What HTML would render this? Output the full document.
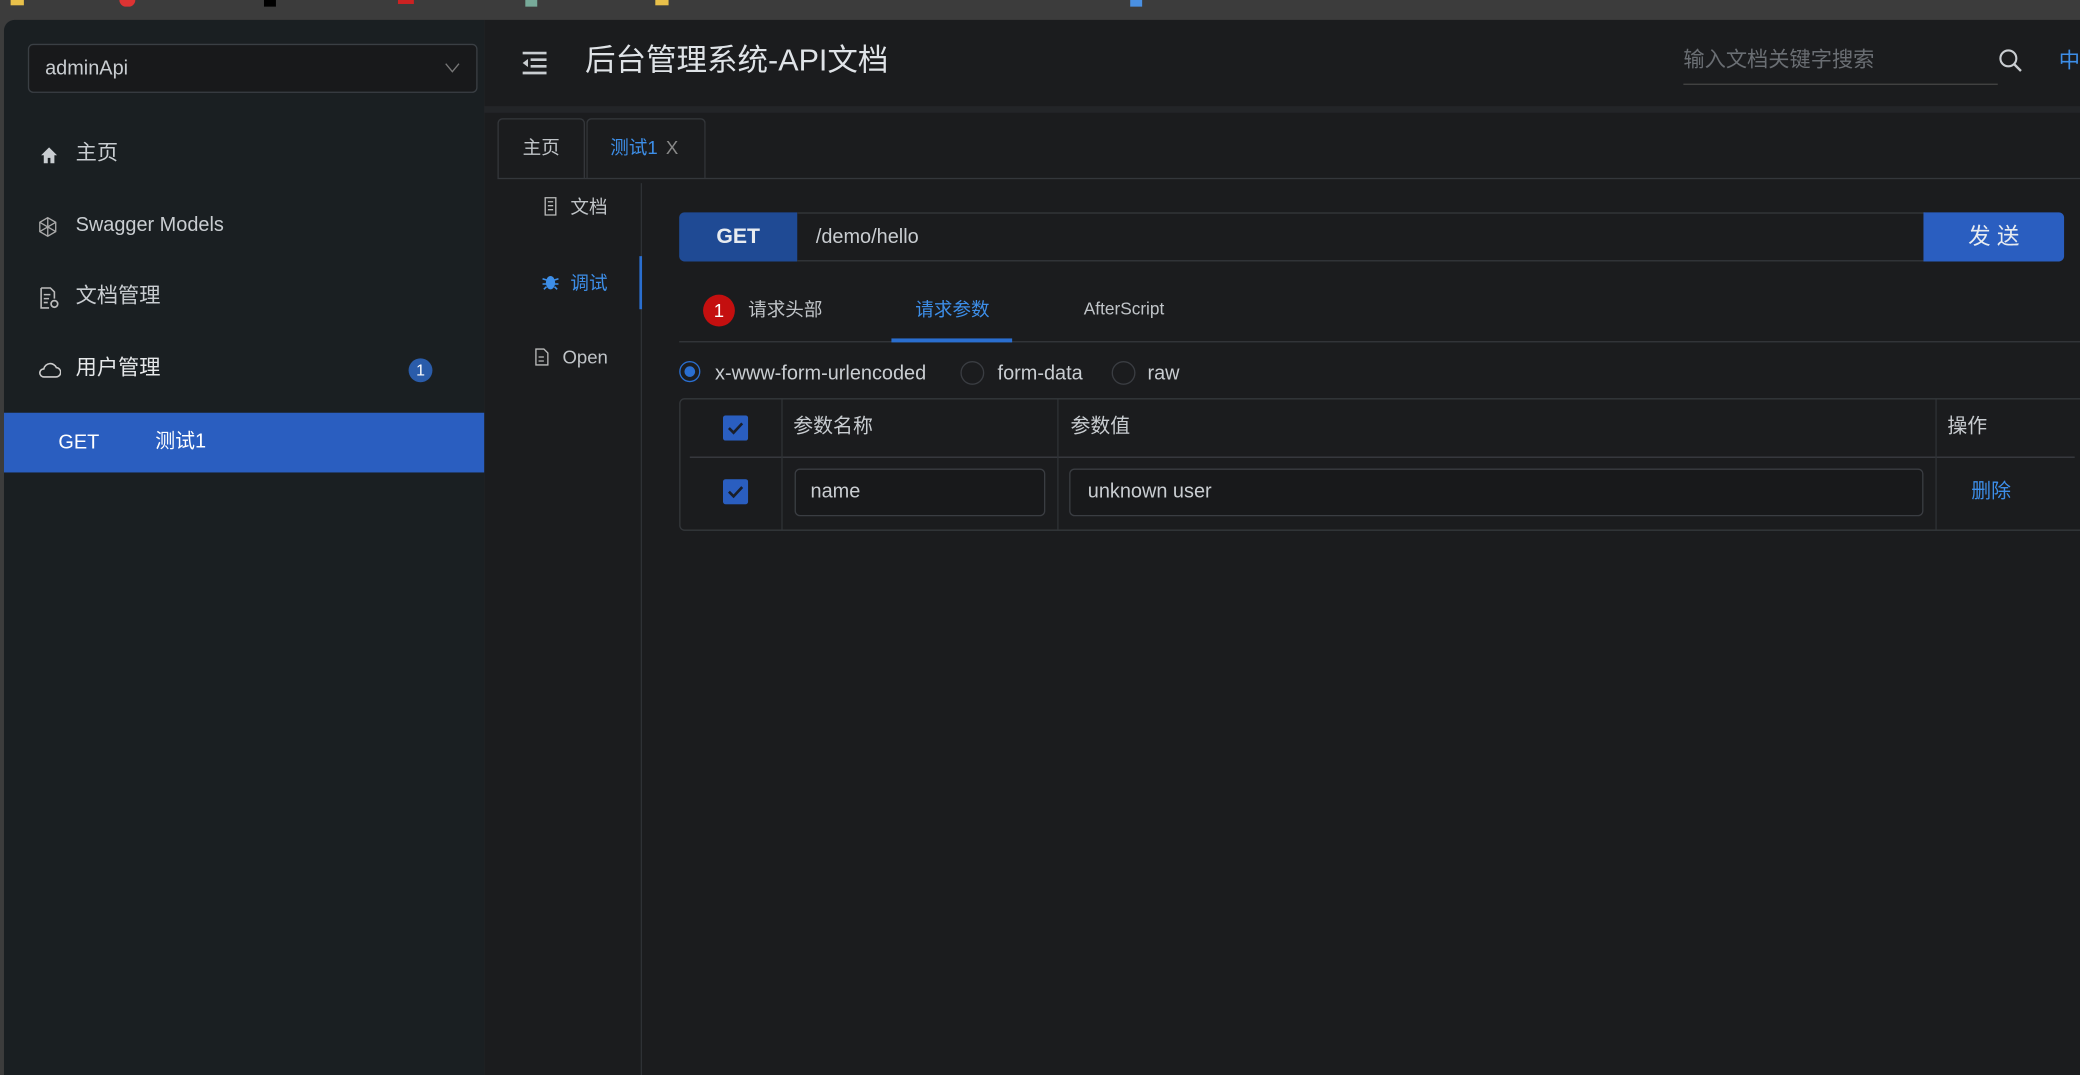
<!DOCTYPE html>
<html><head><meta charset="utf-8">
<style>
html,body{margin:0;padding:0;width:2080px;height:1075px;overflow:hidden;background:#3c3c3c;}
#w{position:absolute;left:0;top:0;width:1568px;height:810px;transform:scale(1.32653,1.32716);transform-origin:0 0;font-family:"Liberation Sans","Noto Sans CJK SC",sans-serif;color:#c9cdd1;line-height:1.3;}
.a{position:absolute;}
.side{left:3px;top:15px;width:362px;height:795px;background:#1a1f22;border-top-left-radius:8px;}
.main{left:365px;top:15px;width:1203px;height:795px;background:#1b1c1e;}
.sel{left:21px;top:33px;width:337px;height:35px;border:1px solid #3a3f44;border-radius:4px;background:#18191b;}
.mi{left:30px;font-size:16px;color:#c9cdd1;}
.inp{border:1px solid #3a3d42;border-radius:4px;background:#18191b;}
.line{background:#2e3135;}
</style></head><body><div id="w">
<div class="a" style="left:8px;top:0;width:10px;height:4px;background:#e8c04a"></div>
<div class="a" style="left:90px;top:0;width:12px;height:5px;background:#d33;border-radius:0 0 6px 6px"></div>
<div class="a" style="left:199px;top:0;width:9px;height:5px;background:#000"></div>
<div class="a" style="left:300px;top:0;width:12px;height:3px;background:#c22"></div>
<div class="a" style="left:396px;top:0;width:9px;height:5px;background:#7a9"></div>
<div class="a" style="left:494px;top:0;width:10px;height:4px;background:#e8c04a"></div>
<div class="a" style="left:852px;top:0;width:9px;height:5px;background:#4a90e2"></div>

<div class="a side"></div>
<div class="a main"></div>
<div class="a sel"><span class="a" style="left:12px;top:8px;font-size:15px;color:#c9cdd1">adminApi</span>
<svg class="a" style="left:313px;top:12px" width="12" height="10" viewBox="0 0 12 10"><path d="M1 2l5 6 5-6" fill="none" stroke="#777" stroke-width="1"/></svg></div>

<svg class="a" style="left:30px;top:110px" width="14" height="14" viewBox="0 0 14 14"><path d="M7 1L1 7h2v6h3V9h2v4h3V7h2z" fill="#c9cdd1"/></svg>
<div class="a mi" style="left:57px;top:106px">主页</div>
<svg class="a" style="left:29px;top:163px" width="14" height="16" viewBox="0 0 14 16"><path d="M7 1l6 3.5v7L7 15 1 11.5v-7z M7 1v14 M1 4.5l12 7 M13 4.5l-12 7" fill="none" stroke="#aaa" stroke-width="1"/></svg>
<div class="a mi" style="left:57px;top:160px;font-size:15px">Swagger Models</div>
<svg class="a" style="left:29px;top:216px" width="16" height="17" viewBox="0 0 16 17"><path d="M2 1h7l3 3v5 M2 1v15h6 M4 6h5M4 9h4M4 12h3" fill="none" stroke="#bbb" stroke-width="1.2"/><circle cx="12" cy="13" r="2.5" fill="none" stroke="#bbb" stroke-width="1.3"/></svg>
<div class="a mi" style="left:57px;top:214px">文档管理</div>
<svg class="a" style="left:29px;top:272px" width="17" height="14" viewBox="0 0 17 14"><path d="M4 12a3 3 0 0 1 0-6 5 5 0 0 1 9.5-1A3.5 3.5 0 0 1 13 12z" fill="none" stroke="#ccc" stroke-width="1.2"/></svg>
<div class="a mi" style="left:57px;top:268px;color:#e6e8ea">用户管理</div>
<div class="a" style="left:308px;top:270px;width:18px;height:18px;border-radius:9px;background:#2a5caa;color:#fff;font-size:12px;text-align:center;line-height:18px">1</div>
<div class="a" style="left:3px;top:311px;width:362px;height:45px;background:#2a5ec0"></div>
<div class="a" style="left:44px;top:324px;font-size:15px;color:#fff">GET</div>
<div class="a" style="left:117px;top:323px;font-size:15px;color:#fff">测试1</div>

<svg class="a" style="left:392px;top:38px" width="22" height="19" viewBox="0 0 22 19"><path d="M2 2h18M8 7h12M8 12h12M2 17h18" stroke="#c9cdd1" stroke-width="2"/><path d="M6 6.5l-4 3 4 3z" fill="#c9cdd1"/></svg>
<div class="a" style="left:441px;top:31px;font-size:23px;color:#dfe3e7">后台管理系统-API文档</div>
<div class="a" style="left:1269px;top:36px;font-size:16px;color:#6a6e73">输入文档关键字搜索</div>
<div class="a" style="left:1269px;top:63px;width:237px;height:1px;background:#444"></div>
<svg class="a" style="left:1506px;top:36px" width="20" height="20" viewBox="0 0 20 20"><circle cx="8" cy="8" r="6" fill="none" stroke="#c9cdd1" stroke-width="1.6"/><path d="M12.5 12.5l5 5" stroke="#c9cdd1" stroke-width="1.8"/></svg>
<div class="a" style="left:1552px;top:37px;font-size:16px;color:#3d8ee8">中</div>
<div class="a" style="left:365px;top:80px;width:1203px;height:5px;background:#232528"></div>

<div class="a" style="left:375px;top:89px;width:64px;height:45px;border:1px solid #34373b;border-bottom:none;border-radius:4px 4px 0 0"></div>
<div class="a" style="left:394px;top:102px;font-size:14px;color:#c0c4c8">主页</div>
<div class="a" style="left:442px;top:89px;width:88px;height:45px;border:1px solid #34373b;border-bottom:none;border-radius:4px 4px 0 0"></div>
<div class="a" style="left:460px;top:102px;font-size:14px;color:#3d8ee8">测试1</div>
<div class="a" style="left:502px;top:102px;font-size:14px;color:#888">X</div>
<div class="a line" style="left:375px;top:134px;width:1193px;height:1px;background:#34373b"></div>

<div class="a line" style="left:483px;top:138px;width:1px;height:672px"></div>
<div class="a" style="left:482px;top:193px;width:2px;height:40px;background:#2a6ecf"></div>
<svg class="a" style="left:409px;top:148px" width="12" height="15" viewBox="0 0 12 15"><path d="M2 1h8v13H2z M4 4h4M4 7h4M4 10h4" fill="none" stroke="#bbb" stroke-width="1"/></svg>
<div class="a" style="left:430px;top:147px;font-size:14px;color:#c0c4c8">文档</div>
<svg class="a" style="left:408px;top:205px" width="14" height="14" viewBox="0 0 14 14"><ellipse cx="7" cy="8" rx="3.5" ry="5" fill="#3d8ee8"/><path d="M1 5l3 1M13 5l-3 1M1 9h3M13 9h-3M2 13l2-2M12 13l-2-2" stroke="#3d8ee8" stroke-width="1.2"/></svg>
<div class="a" style="left:430px;top:204px;font-size:14px;color:#3d8ee8">调试</div>
<svg class="a" style="left:403px;top:262px" width="11" height="14" viewBox="0 0 11 14"><path d="M1 1h6l3 3v9H1z M3 7h4M3 10h4" fill="none" stroke="#bbb" stroke-width="1"/></svg>
<div class="a" style="left:424px;top:260px;font-size:14px;color:#c0c4c8">Open</div>

<div class="a" style="left:512px;top:160px;width:89px;height:37px;background:#1f4a94;border-radius:4px 0 0 4px;color:#e8ecf0;font-weight:bold;font-size:16px;text-align:center;line-height:37px">GET</div>
<div class="a" style="left:601px;top:160px;width:849px;height:35px;border:1px solid #34373b;border-left:none"></div>
<div class="a" style="left:615px;top:169px;font-size:15px;color:#c9cdd1">/demo/hello</div>
<div class="a" style="left:1450px;top:160px;width:106px;height:37px;background:#2a5ec0;border-radius:0 4px 4px 0;color:#e8ecf0;font-size:17px;text-align:center;line-height:37px">发 送</div>

<div class="a" style="left:530px;top:222px;width:24px;height:24px;border-radius:12px;background:#c40f0f;color:#fff;font-size:14px;text-align:center;line-height:24px">1</div>
<div class="a" style="left:564px;top:224px;font-size:14px;color:#c0c4c8">请求头部</div>
<div class="a" style="left:690px;top:224px;font-size:14px;color:#3d8ee8">请求参数</div>
<div class="a" style="left:817px;top:225px;font-size:13px;color:#c0c4c8">AfterScript</div>
<div class="a" style="left:512px;top:257px;width:1056px;height:1px;background:#34373b"></div>
<div class="a" style="left:672px;top:255px;width:91px;height:3px;background:#2a6ecf"></div>

<div class="a" style="left:512px;top:272px;width:16px;height:16px;border:1px solid #2a6ecf;border-radius:50%;box-sizing:border-box"><div class="a" style="left:3px;top:3px;width:8px;height:8px;border-radius:50%;background:#2a6ecf"></div></div>
<div class="a" style="left:539px;top:272px;font-size:15px;color:#c9cdd1">x-www-form-urlencoded</div>
<div class="a" style="left:724px;top:272px;width:18px;height:18px;border:1px solid #3a3d42;border-radius:50%;box-sizing:border-box"></div>
<div class="a" style="left:752px;top:272px;font-size:15px;color:#c9cdd1">form-data</div>
<div class="a" style="left:838px;top:272px;width:18px;height:18px;border:1px solid #3a3d42;border-radius:50%;box-sizing:border-box"></div>
<div class="a" style="left:865px;top:272px;font-size:15px;color:#c9cdd1">raw</div>

<div class="a" style="left:512px;top:300px;width:1060px;height:98px;border:1px solid #34373b;border-radius:4px"></div>
<div class="a line" style="left:520px;top:344px;width:1044px;height:1px;background:#3a3d42"></div>
<div class="a line" style="left:589px;top:301px;width:1px;height:98px"></div>
<div class="a line" style="left:797px;top:301px;width:1px;height:98px"></div>
<div class="a line" style="left:1459px;top:301px;width:1px;height:98px"></div>
<svg class="a" style="left:545px;top:313px" width="19" height="19" viewBox="0 0 19 19"><rect width="19" height="19" rx="2" fill="#2a5ec0"/><path d="M4.5 9.5l3.5 3.5 6.5-7" fill="none" stroke="#1a1f2a" stroke-width="2"/></svg>
<svg class="a" style="left:545px;top:361px" width="19" height="19" viewBox="0 0 19 19"><rect width="19" height="19" rx="2" fill="#2a5ec0"/><path d="M4.5 9.5l3.5 3.5 6.5-7" fill="none" stroke="#1a1f2a" stroke-width="2"/></svg>
<div class="a" style="left:598px;top:312px;font-size:15px;color:#c9cdd1">参数名称</div>
<div class="a" style="left:807px;top:312px;font-size:15px;color:#c9cdd1">参数值</div>
<div class="a" style="left:1468px;top:312px;font-size:15px;color:#c9cdd1">操作</div>
<div class="a inp" style="left:599px;top:353px;width:187px;height:34px"></div>
<div class="a" style="left:611px;top:361px;font-size:15px;color:#c9cdd1">name</div>
<div class="a inp" style="left:806px;top:353px;width:642px;height:34px"></div>
<div class="a" style="left:820px;top:361px;font-size:15px;color:#c9cdd1">unknown user</div>
<div class="a" style="left:1486px;top:361px;font-size:15px;color:#3d8ee8">删除</div>
</div></body></html>
